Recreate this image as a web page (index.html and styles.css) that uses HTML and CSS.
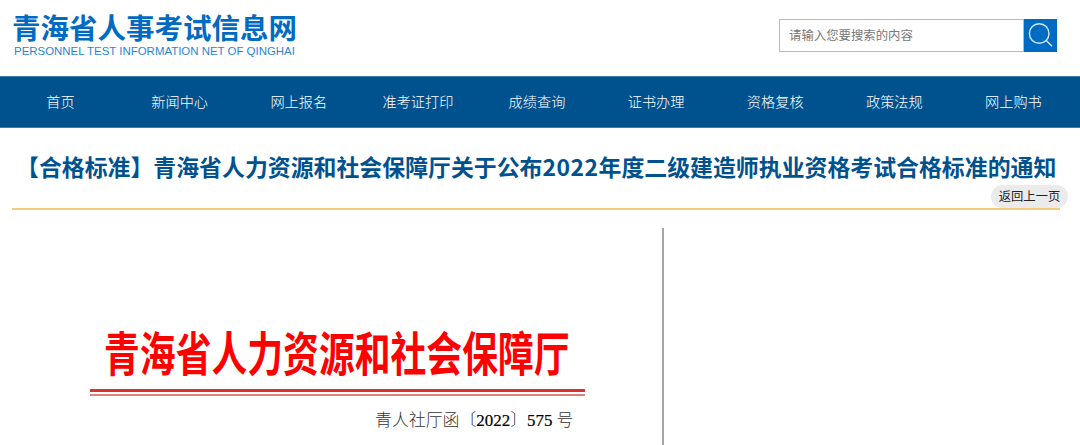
FILE: index.html
```html
<!DOCTYPE html>
<html lang="zh-CN">
<head>
    <meta charset="UTF-8">
    <meta name="viewport" content="width=device-width, initial-scale=1.0">
    <title>青海省人事考试信息网</title>
    <link rel="stylesheet" href="styles.css">
</head>
<body>
    <div class="header">
        <div class="logo">
            <div class="logo-cn">青海省人事考试信息网</div>
            <div class="logo-en">PERSONNEL TEST INFORMATION NET OF QINGHAI</div>
        </div>
        <form class="search">
            <input type="text" placeholder="请输入您要搜索的内容">
            <button type="button" aria-label="搜索">
                <svg width="33" height="33" viewBox="0 0 33 33" fill="none" stroke="#d5e8f8" stroke-width="1.4">
                    <circle cx="15.2" cy="14.5" r="9.8"/>
                    <path d="M22 21.3l6 6"/>
                </svg>
            </button>
        </form>
    </div>

    <div class="nav">
        <a>首页</a>
        <a>新闻中心</a>
        <a>网上报名</a>
        <a>准考证打印</a>
        <a>成绩查询</a>
        <a>证书办理</a>
        <a>资格复核</a>
        <a>政策法规</a>
        <a>网上购书</a>
    </div>

    <div class="title">
        <h1>【合格标准】青海省人力资源和社会保障厅关于公布<span class="year">2022</span>年度二级建造师执业资格考试合格标准的通知</h1>
        <a class="back">返回上一页</a>
    </div>

    <div class="content">
        <div class="paper">
            <div class="red-head"><span>青海省人力资源和社会保障厅</span></div>
            <div class="red-line"></div>
            <div class="doc-no">青人社厅函〔<b>2022</b>〕<b>575</b> 号</div>
        </div>
    </div>
</body>
</html>
```
FILE: styles.css
```css
body {
    margin: 0;
    height: 445px;
    overflow: hidden;
    background: #fff;
    font-family: "Noto Sans CJK SC", sans-serif;
}
/* 顶部 */
.header {
    display: flex;
    justify-content: space-between;
    height: 76px;
    padding: 0 23px 0 12px;
    box-sizing: border-box;
}
.logo {
    padding-top: 11px;
    white-space: nowrap;
    color: #006bc2;
}
.logo-cn {
    font-size: 28.5px;
    line-height: 32px;
    font-weight: bold;
}
.logo-en {
    margin: 2px 0 0 2px;
    font-family: "Liberation Sans", Arial, sans-serif;
    font-size: 11.45px;
    line-height: 13px;
    color: #2b85cf;
}
.search {
    display: flex;
    width: 278px;
    height: 33px;
    margin: 19px 0 0;
}
.search input {
    flex: 1;
    min-width: 0;
    padding: 0 10px 1px 9px;
    border: 1px solid #b9b9b9;
    font-family: inherit;
    font-size: 12.4px;
}
.search input::placeholder {
    color: #777;
}
.search button {
    width: 33px;
    padding: 0;
    border: none;
    background: #006bc2;
}
.search svg {
    display: block;
}
/* 导航 */
.nav {
    display: flex;
    height: 52px;
    padding: 0 7px 0 1px;
    box-sizing: border-box;
    background: #00528f;
    border-top: 1px solid #3f7daf;
    border-bottom: 1px solid #3f7daf;
}
.nav a {
    flex: 1;
    text-align: center;
    line-height: 49px;
    font-size: 14.2px;
    font-weight: 300;
    color: #fff;
}
/* 标题 */
.title {
    position: relative;
    height: 80px;
    margin: 0 20px 0 12px;
    border-bottom: 2px solid #f5cb80;
}
.title h1 {
    margin: 0;
    padding: 21px 0 0 4px;
    font-size: 22.9px;
    line-height: 34px;
    color: #00528f;
    white-space: nowrap;
}
.year {
    letter-spacing: 0.5px;
}
.back {
    position: absolute;
    right: -8px;
    bottom: 0;
    width: 77px;
    height: 23px;
    line-height: 23px;
    border-radius: 12px;
    background: #ebebeb;
    text-align: center;
    font-size: 12.3px;
    color: #222;
}
/* 正文 */
.content {
    padding-top: 18px;
}
.paper {
    width: 664px;
    height: 217px;
    padding-top: 93px;
    border-right: 2px solid #a5a5a5;
    box-sizing: border-box;
}
.red-head {
    height: 68px;
    padding-left: 104px;
}
.red-head span {
    display: inline-block;
    font-size: 47px;
    line-height: 60px;
    font-weight: bold;
    color: #fe0000;
    white-space: nowrap;
    transform: scaleX(0.762);
    transform-origin: left;
}
.red-line {
    width: 495px;
    height: 2px;
    margin-left: 90px;
    border-top: 3px solid #dc2f2f;
    border-bottom: 2px solid #e07f7f;
}
.doc-no {
    margin: 11px 0 0 375px;
    font-family: "Liberation Serif", "Noto Sans CJK SC", serif;
    font-size: 16.9px;
    line-height: 28px;
    font-weight: 300;
    color: #333;
    white-space: nowrap;
}
.doc-no b {
    font-weight: normal;
    color: #000;
    -webkit-text-stroke: 0.2px #000;
}
```
